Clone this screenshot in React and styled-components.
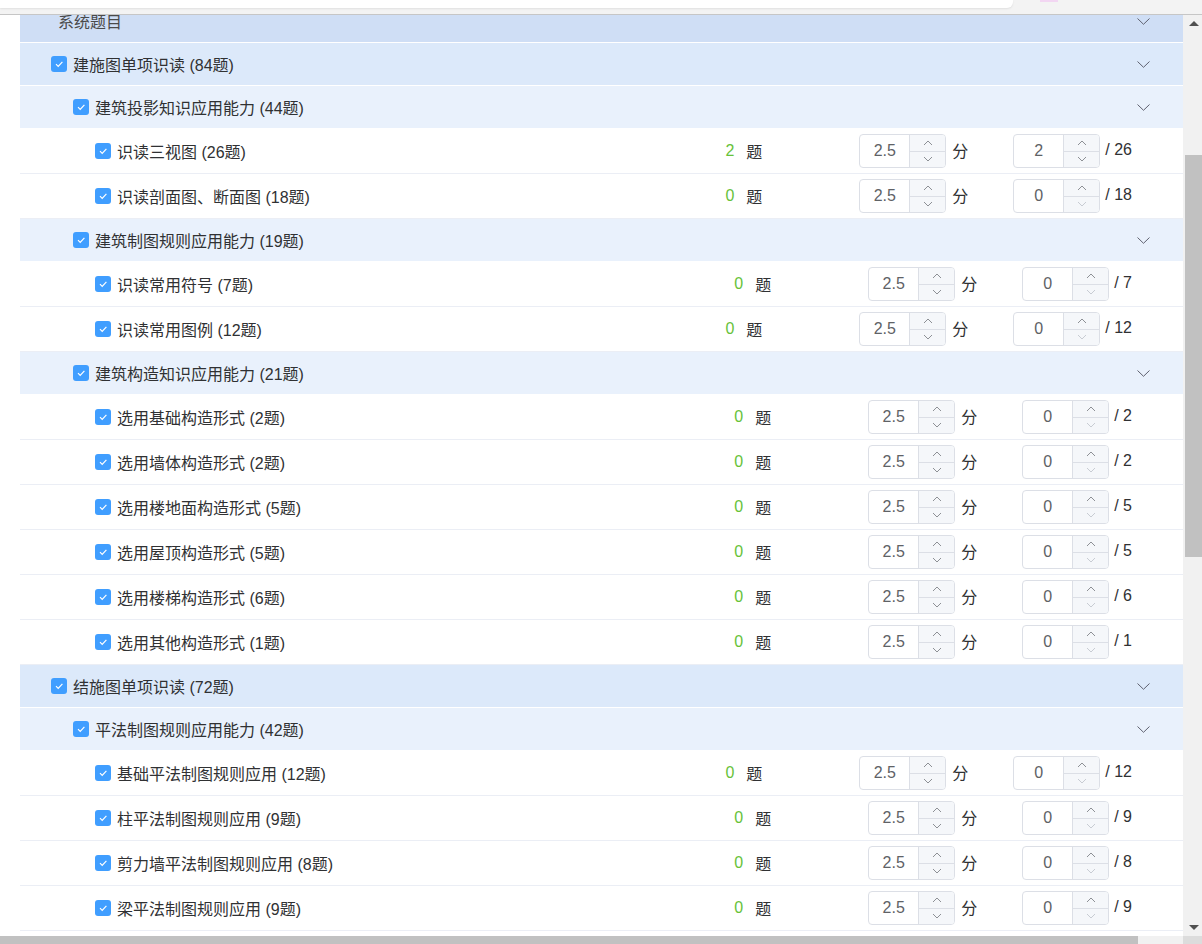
import React, { useLayoutEffect, useRef } from "react";
import styled, { createGlobalStyle } from "styled-components";

const GlobalStyle = createGlobalStyle`
  html, body { margin: 0; padding: 0; background: #fff; }
  body { font-family: "Liberation Sans", "Noto Sans CJK SC", sans-serif; }
`;

const tree = [
  {
    title: "建施图单项识读 (84题)",
    children: [
      {
        title: "建筑投影知识应用能力 (44题)",
        items: [
          { name: "识读三视图 (26题)", count: 2, total: 26 },
          { name: "识读剖面图、断面图 (18题)", count: 0, total: 18 },
        ],
      },
      {
        title: "建筑制图规则应用能力 (19题)",
        items: [
          { name: "识读常用符号 (7题)", count: 0, total: 7 },
          { name: "识读常用图例 (12题)", count: 0, total: 12 },
        ],
      },
      {
        title: "建筑构造知识应用能力 (21题)",
        items: [
          { name: "选用基础构造形式 (2题)", count: 0, total: 2 },
          { name: "选用墙体构造形式 (2题)", count: 0, total: 2 },
          { name: "选用楼地面构造形式 (5题)", count: 0, total: 5 },
          { name: "选用屋顶构造形式 (5题)", count: 0, total: 5 },
          { name: "选用楼梯构造形式 (6题)", count: 0, total: 6 },
          { name: "选用其他构造形式 (1题)", count: 0, total: 1 },
        ],
      },
    ],
  },
  {
    title: "结施图单项识读 (72题)",
    children: [
      {
        title: "平法制图规则应用能力 (42题)",
        items: [
          { name: "基础平法制图规则应用 (12题)", count: 0, total: 12 },
          { name: "柱平法制图规则应用 (9题)", count: 0, total: 9 },
          { name: "剪力墙平法制图规则应用 (8题)", count: 0, total: 8 },
          { name: "梁平法制图规则应用 (9题)", count: 0, total: 9 },
        ],
      },
    ],
  },
];

const Page = styled.div`
  width: 1202px;
  height: 944px;
  display: flex;
  flex-direction: column;
  overflow: hidden;
  background: #fff;
`;

const Chrome = styled.div`
  height: 14px;
  flex-shrink: 0;
  background: #f3f3f3;
  border-bottom: 1px solid #c6c6c6;
  display: flex;
  align-items: flex-start;
`;

const AddressTail = styled.div`
  width: 1013px;
  height: 8px;
  background: #fff;
  border-radius: 0 0 6px 0;
  box-shadow: 0 1px 2px rgba(0, 0, 0, 0.08);
`;

const ChromeMark = styled.div`
  width: 18px;
  height: 2px;
  margin-left: 27px;
  background: #f2d6f2;
`;

const Body = styled.div`
  flex: 1;
  display: flex;
  min-height: 0;
`;

const Viewport = styled.div`
  flex: 1;
  overflow: hidden;
  padding-left: 20px;
`;

const VScroll = styled.div`
  width: 19px;
  flex-shrink: 0;
  background: #f1f1f1;
  display: flex;
  flex-direction: column;
`;

const ArrowBox = styled.div`
  height: 17px;
  display: flex;
  align-items: center;
  justify-content: center;
  padding-left: 2px;
`;

const Tri = styled.div`
  width: 0;
  height: 0;
  border-left: 5px solid transparent;
  border-right: 5px solid transparent;
  ${(p) =>
    p.$down
      ? "border-top: 5px solid #505050;"
      : "border-bottom: 5px solid #505050;"}
`;

const VTrack = styled.div`
  flex: 1;
`;

const VThumb = styled.div`
  margin: 123px 0 0 2px;
  height: 402px;
  background: #c1c1c1;
`;

const HBar = styled.div`
  height: 8px;
  flex-shrink: 0;
  display: flex;
`;

const HTrack = styled.div`
  flex: 1;
  background: #f1f1f1;
  display: flex;
`;

const HThumb = styled.div`
  width: 1138px;
  background: #c1c1c1;
`;

const Corner = styled.div`
  width: 19px;
  background: #dcdcdc;
`;

const GroupRow = styled.div`
  height: 42px;
  border-bottom: 1px solid #fff;
  background: ${(p) => p.$bg};
  display: flex;
  align-items: center;
  padding-left: ${(p) => p.$indent}px;
  padding-right: 33px;
  color: ${(p) => p.$color || "#303133"};
  font-size: 16px;
`;

const LeafRow = styled.div`
  height: 44px;
  border-bottom: 1px solid #ebeef5;
  display: flex;
  align-items: center;
  padding-left: 75px;
  padding-right: 51px;
  font-size: 16px;
  color: #303133;
`;

const Label = styled.label`
  flex: 1;
  display: flex;
  align-items: center;
  gap: 6px;
  white-space: nowrap;
`;

const Box = styled.span`
  width: 16px;
  height: 16px;
  border-radius: 3px;
  background: #409eff;
  display: inline-flex;
  align-items: center;
  justify-content: center;
  flex-shrink: 0;
`;

const Right = styled.div`
  display: flex;
  align-items: center;
  white-space: nowrap;
`;

const Count = styled.span`
  color: #67c23a;
`;

const Unit = styled.span`
  margin-left: 12px;
`;

const NumBox = styled.div`
  width: 87px;
  height: 34px;
  box-sizing: border-box;
  border: 1px solid #dcdfe6;
  border-radius: 4px;
  display: flex;
  overflow: hidden;
  margin-left: ${(p) => p.$gap}px;
  background: #fff;
`;

const NumValue = styled.div`
  flex: 1;
  display: flex;
  align-items: center;
  justify-content: center;
  color: #606266;
  font-size: 16px;
`;

const NumControls = styled.div`
  width: 35px;
  border-left: 1px solid #dcdfe6;
  background: #f5f7fa;
  display: flex;
  flex-direction: column;
`;

const NumBtn = styled.div`
  flex: 1;
  display: flex;
  align-items: center;
  justify-content: center;
  color: ${(p) => (p.$disabled ? "#c8ccd3" : "#8d9095")};
  & + & {
    border-top: 1px solid #dcdfe6;
  }
`;

const After = styled.span`
  margin-left: ${(p) => p.$gap}px;
  margin-top: -3px;
`;

const Check = () => (
  <Box>
    <svg width="12" height="12" viewBox="0 0 12 12">
      <polyline points="3,6.2 5.2,8.4 9.4,3.8" fill="none" stroke="#fff" strokeWidth="1.2" />
    </svg>
  </Box>
);

const Chevron = () => (
  <svg width="13" height="7" viewBox="0 0 13 7">
    <polyline points="0.5,0.5 6.5,6.3 12.5,0.5" fill="none" stroke="#5f6270" strokeWidth="1" />
  </svg>
);

const Caret = ({ up }) => (
  <svg width="10" height="6" viewBox="0 0 10 6">
    <polyline
      points={up ? "1,5 5,1 9,5" : "1,1 5,5 9,1"}
      fill="none"
      stroke="currentColor"
      strokeWidth="1"
    />
  </svg>
);

const InputNumber = ({ value, gap, min }) => (
  <NumBox $gap={gap}>
    <NumValue>{value}</NumValue>
    <NumControls>
      <NumBtn>
        <Caret up />
      </NumBtn>
      <NumBtn $disabled={min}>
        <Caret />
      </NumBtn>
    </NumControls>
  </NumBox>
);

const Leaf = ({ item }) => (
  <LeafRow>
    <Label>
      <Check />
      {item.name}
    </Label>
    <Right>
      <Count>{item.count}</Count>
      <Unit>题</Unit>
      <InputNumber value="2.5" gap={97} />
      <After $gap={6}>分</After>
      <InputNumber value={item.count} gap={45} min={item.count === 0} />
      <After $gap={5}>/ {item.total}</After>
    </Right>
  </LeafRow>
);

export default function App() {
  const viewRef = useRef(null);

  useLayoutEffect(() => {
    if (viewRef.current) viewRef.current.scrollTop = 15;
  }, []);

  return (
    <Page>
      <GlobalStyle />
      <Chrome>
        <AddressTail />
        <ChromeMark />
      </Chrome>
      <Body>
        <Viewport ref={viewRef}>
          <GroupRow $bg="#cfdef5" $indent={38} $color="#4a4a4a">
            <Label>系统题目</Label>
            <Chevron />
          </GroupRow>
          {tree.map((group) => (
            <React.Fragment key={group.title}>
              <GroupRow $bg="#dce9fa" $indent={31}>
                <Label>
                  <Check />
                  {group.title}
                </Label>
                <Chevron />
              </GroupRow>
              {group.children.map((sub) => (
                <React.Fragment key={sub.title}>
                  <GroupRow $bg="#e9f1fc" $indent={53}>
                    <Label>
                      <Check />
                      {sub.title}
                    </Label>
                    <Chevron />
                  </GroupRow>
                  {sub.items.map((item) => (
                    <Leaf key={item.name} item={item} />
                  ))}
                </React.Fragment>
              ))}
            </React.Fragment>
          ))}
          <LeafRow />
        </Viewport>
        <VScroll>
          <ArrowBox>
            <Tri />
          </ArrowBox>
          <VTrack>
            <VThumb />
          </VTrack>
          <ArrowBox>
            <Tri $down />
          </ArrowBox>
        </VScroll>
      </Body>
      <HBar>
        <HTrack>
          <HThumb />
        </HTrack>
        <Corner />
      </HBar>
    </Page>
  );
}
